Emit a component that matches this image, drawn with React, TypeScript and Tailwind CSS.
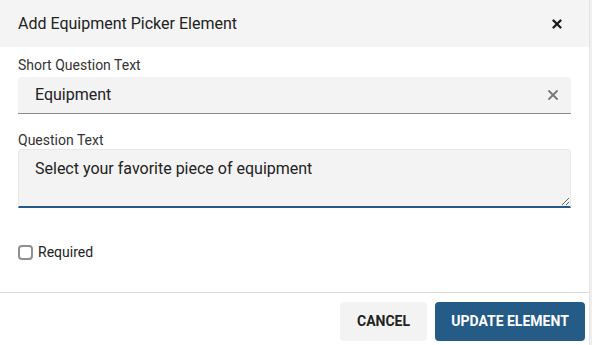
import { X } from "lucide-react";

const Header = () => (
    <div className="flex items-center justify-between h-[47px] pl-[18px] pr-[25px] bg-[#f4f4f4]">
        <div className="text-[16px] text-[#222]">Add Equipment Picker Element</div>
        <X size={14} strokeWidth={4} color="#1a1a1a" />
    </div>
);

const ShortQuestion = () => (
    <div className="flex flex-col">
        <label className="text-[14px] text-[#333] leading-[18px]">Short Question Text</label>
        <div className="mt-[3px] h-[37px] flex items-center justify-between bg-[#f3f3f3] rounded-t-[4px] border-b border-[#8c8c8c] pl-[17px] pr-[10px]">
            <span className="text-[16px] text-[#222]">Equipment</span>
            <X size={16} strokeWidth={2.75} color="#777" />
        </div>
    </div>
);

const QuestionText = () => (
    <div className="flex flex-col">
        <label className="text-[14px] text-[#333] leading-[18px]">Question Text</label>
        <textarea
            className="h-[59px] w-[553px] bg-[#f3f3f3] rounded-t-[4px] border border-[#e8e8e8] border-b-2 border-b-[#245a8a] pl-[16px] pt-[7px] text-[16px] text-[#222] outline-none"
            defaultValue="Select your favorite piece of equipment"
        />
    </div>
);

const RequiredCheck = () => (
    <label className="flex items-center gap-[5px] mt-[34px]">
        <span className="block shrink-0 w-[15px] h-[15px] rounded-[4px] border-2 border-[#8f8f8f] bg-white" />
        <span className="text-[14px] text-[#222]">Required</span>
    </label>
);

const Footer = () => (
    <div className="flex justify-end gap-[8px] border-t border-[#dcdcdc] pt-[9px] pr-[4px]">
        <button className="h-[39px] w-[87px] rounded-[4px] bg-[#f3f3f3] text-[14px] font-bold text-[#222]">CANCEL</button>
        <button className="h-[39px] w-[150px] rounded-[4px] bg-[#255b87] text-[14px] font-bold text-white">UPDATE ELEMENT</button>
    </div>
);

export default function App() {
    return (
        <div className="w-[592px] h-[345px] bg-white font-['Roboto',sans-serif] flex overflow-hidden">
            <div className="w-[589px] flex flex-col">
                <Header />
                <div className="flex flex-col gap-[17px] px-[18px] pt-[9px]">
                    <ShortQuestion />
                    <QuestionText />
                </div>
                <div className="px-[18px]">
                    <RequiredCheck />
                </div>
                <div className="mt-[29px]">
                    <Footer />
                </div>
            </div>
            <div className="w-[3px] bg-[#efefef] border-l border-[#e4e4e4]" />
        </div>
    );
}
